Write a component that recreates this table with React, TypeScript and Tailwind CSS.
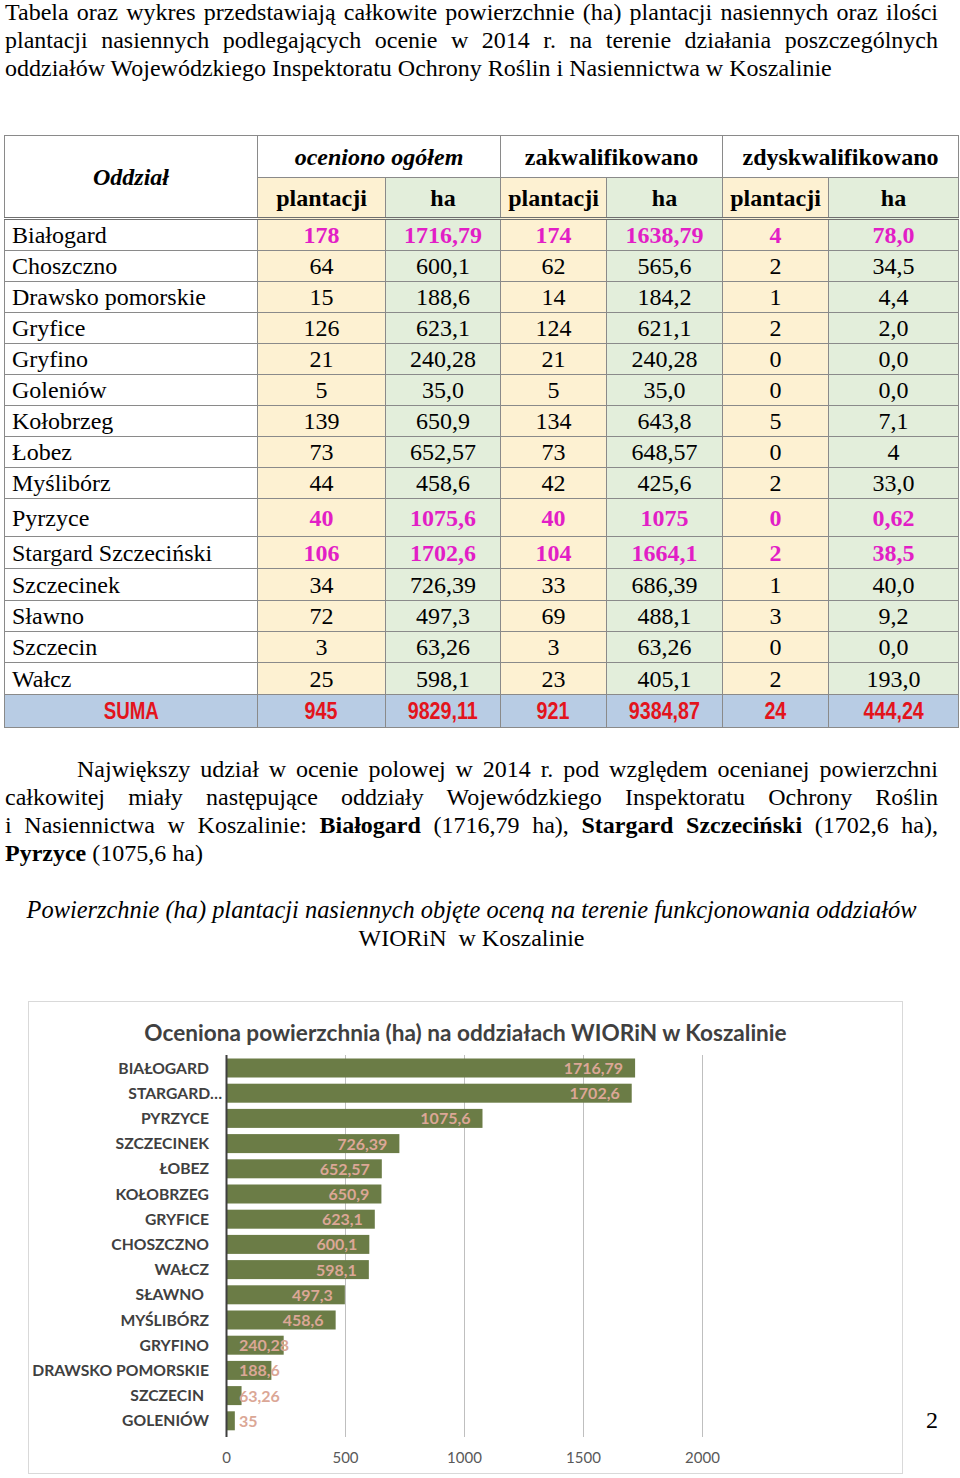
import React from "react";

type Row = {
  name: string;
  v: string[];
  hl?: boolean;
  h: string;
};

const rows: Row[] = [
  { name: "Białogard", v: ["178", "1716,79", "174", "1638,79", "4", "78,0"], hl: true, h: "h-[32px]" },
  { name: "Choszczno", v: ["64", "600,1", "62", "565,6", "2", "34,5"], h: "h-[31px]" },
  { name: "Drawsko pomorskie", v: ["15", "188,6", "14", "184,2", "1", "4,4"], h: "h-[31px]" },
  { name: "Gryfice", v: ["126", "623,1", "124", "621,1", "2", "2,0"], h: "h-[31px]" },
  { name: "Gryfino", v: ["21", "240,28", "21", "240,28", "0", "0,0"], h: "h-[31px]" },
  { name: "Goleniów", v: ["5", "35,0", "5", "35,0", "0", "0,0"], h: "h-[31px]" },
  { name: "Kołobrzeg", v: ["139", "650,9", "134", "643,8", "5", "7,1"], h: "h-[31px]" },
  { name: "Łobez", v: ["73", "652,57", "73", "648,57", "0", "4"], h: "h-[31px]" },
  { name: "Myślibórz", v: ["44", "458,6", "42", "425,6", "2", "33,0"], h: "h-[31px]" },
  { name: "Pyrzyce", v: ["40", "1075,6", "40", "1075", "0", "0,62"], hl: true, h: "h-[38px]" },
  { name: "Stargard Szczeciński", v: ["106", "1702,6", "104", "1664,1", "2", "38,5"], hl: true, h: "h-[32px]" },
  { name: "Szczecinek", v: ["34", "726,39", "33", "686,39", "1", "40,0"], h: "h-[32px]" },
  { name: "Sławno", v: ["72", "497,3", "69", "488,1", "3", "9,2"], h: "h-[31px]" },
  { name: "Szczecin", v: ["3", "63,26", "3", "63,26", "0", "0,0"], h: "h-[31px]" },
  { name: "Wałcz", v: ["25", "598,1", "23", "405,1", "2", "193,0"], h: "h-[32px]" },
];

const sums = ["945", "9829,11", "921", "9384,87", "24", "444,24"];

const colBg = ["bg-[#fdf1d2]", "bg-[#e3eedb]", "bg-[#fdf1d2]", "bg-[#e3eedb]", "bg-[#fdf1d2]", "bg-[#e3eedb]"];

const chart: { name: string; v: number; label: string; end: number }[] = [
  { name: "BIAŁOGARD", v: 1716.79, label: "1716,79", end: 180 },
  { name: "STARGARD…", v: 1702.6, label: "1702,6", end: 193 },
  { name: "PYRZYCE", v: 1075.6, label: "1075,6", end: 180 },
  { name: "SZCZECINEK", v: 726.39, label: "726,39", end: 180 },
  { name: "ŁOBEZ", v: 652.57, label: "652,57", end: 180 },
  { name: "KOŁOBRZEG", v: 650.9, label: "650,9", end: 180 },
  { name: "GRYFICE", v: 623.1, label: "623,1", end: 180 },
  { name: "CHOSZCZNO", v: 600.1, label: "600,1", end: 180 },
  { name: "WAŁCZ", v: 598.1, label: "598,1", end: 180 },
  { name: "SŁAWNO", v: 497.3, label: "497,3", end: 175 },
  { name: "MYŚLIBÓRZ", v: 458.6, label: "458,6", end: 180 },
  { name: "GRYFINO", v: 240.28, label: "240,28", end: 180 },
  { name: "DRAWSKO POMORSKIE", v: 188.6, label: "188,6", end: 180 },
  { name: "SZCZECIN", v: 63.26, label: "63,26", end: 175 },
  { name: "GOLENIÓW", v: 35, label: "35", end: 180 },
];

const X0 = 197.5;
const SC = 0.238;

function Chart() {
  return (
    <svg width="873" height="426" viewBox="0 0 873 426" className="block">
      {[500, 1000, 1500, 2000].map((g) => (
        <line key={g} x1={X0 + g * SC} x2={X0 + g * SC} y1={8} y2={390} stroke="#bfbfbf" strokeWidth={1} />
      ))}
      {chart.map((c, i) => {
        const cy = 21 + i * 25.2;
        const end = X0 + c.v * SC;
        const big = c.v >= 300;
        return (
          <g key={c.name}>
            <rect x={X0} y={cy - 9.5} width={c.v * SC} height={19} fill="#6b7c46" />
            <text
              x={c.end}
              y={cy + 5.5}
              textAnchor="end"
              fontFamily="Lato, 'Open Sans', sans-serif"
              fontWeight={700}
              fontSize={15.7}
              fill="#404040"
            >
              {c.name}
            </text>
            <text
              x={big ? end - 12 : 210}
              y={cy + 6}
              textAnchor={big ? "end" : "start"}
              fontFamily="Lato, 'Open Sans', sans-serif"
              fontWeight={700}
              fontSize={16}
              fill="#dba796"
            >
              {c.label}
            </text>
          </g>
        );
      })}
      <line x1={X0} x2={X0} y1={8} y2={390} stroke="#3f3f3f" strokeWidth={2} />
      {[0, 500, 1000, 1500, 2000].map((g) => (
        <text
          key={g}
          x={X0 + g * SC}
          y={415.5}
          textAnchor="middle"
          fontFamily="Lato, 'Open Sans', sans-serif"
          fontSize={15}
          fill="#595959"
        >
          {g}
        </text>
      ))}
    </svg>
  );
}

const lineJ = "text-justify [text-align-last:justify] leading-[28px]";

const sumaCell =
  "border border-[#8a8a8a] text-center font-['Liberation_Sans',sans-serif] font-bold text-[24px] text-[#e3141c]";

export default function App() {
  return (
    <div className="w-[960px] h-[1478px] bg-white text-black font-['Liberation_Serif','Times_New_Roman',serif] overflow-hidden">
      {/* Intro paragraph */}
      <div className="pl-[5px] pr-[22px] text-[24px] -mt-[2px]">
        <div className={lineJ}>
          Tabela oraz wykres przedstawiają całkowite powierzchnie (ha) plantacji nasiennych oraz ilości
        </div>
        <div className={lineJ}>
          plantacji nasiennych podlegających ocenie w 2014 r. na terenie działania poszczególnych
        </div>
        <div className="leading-[28px]">
          oddziałów Wojewódzkiego Inspektoratu Ochrony Roślin i Nasiennictwa w Koszalinie
        </div>
      </div>

      {/* Table */}
      <table className="mt-[53px] ml-[4px] w-[954px] table-fixed border-collapse text-[24px] leading-none">
        <colgroup>
          <col className="w-[253px]" />
          <col className="w-[128px]" />
          <col className="w-[115px]" />
          <col className="w-[106px]" />
          <col className="w-[116px]" />
          <col className="w-[106px]" />
          <col className="w-[130px]" />
        </colgroup>
        <thead>
          <tr className="h-[42px]">
            <th
              rowSpan={2}
              className="border border-[#8a8a8a] border-b-[3px] border-b-[#6f6f6f] border-double bg-white font-bold italic text-center align-middle"
            >
              Oddział
            </th>
            <th colSpan={2} className="border border-[#8a8a8a] bg-white font-bold italic">
              oceniono ogółem
            </th>
            <th colSpan={2} className="border border-[#8a8a8a] bg-white font-bold">
              zakwalifikowano
            </th>
            <th colSpan={2} className="border border-[#8a8a8a] bg-white font-bold">
              zdyskwalifikowano
            </th>
          </tr>
          <tr className="h-[41px]">
            {["plantacji", "ha", "plantacji", "ha", "plantacji", "ha"].map((t, i) => (
              <th
                key={i}
                className={`border border-[#8a8a8a] border-b-[3px] border-double border-b-[#6f6f6f] font-bold ${colBg[i]}`}
              >
                {t}
              </th>
            ))}
          </tr>
        </thead>
        <tbody>
          {rows.map((r) => (
            <tr key={r.name} className={r.h}>
              <td className="border border-[#8a8a8a] bg-white pl-[7px] text-left whitespace-nowrap">{r.name}</td>
              {r.v.map((v, i) => (
                <td
                  key={i}
                  className={`border border-[#8a8a8a] text-center ${colBg[i]} ${
                    r.hl ? "font-bold text-[#e21ec6]" : ""
                  }`}
                >
                  {v}
                </td>
              ))}
            </tr>
          ))}
          <tr className="h-[33px] bg-[#b8cce4]">
            <td className={sumaCell}>
              <span className="inline-block scale-x-[0.78]">SUMA</span>
            </td>
            {sums.map((s, i) => (
              <td key={i} className={sumaCell}>
                <span className="inline-block scale-x-[0.82]">{s}</span>
              </td>
            ))}
          </tr>
        </tbody>
      </table>

      {/* Paragraph */}
      <div className="mt-[27px] pl-[5px] pr-[22px] text-[24px]">
        <div className={`${lineJ} pl-[72px]`}>
          Największy udział w ocenie polowej w 2014 r. pod względem ocenianej powierzchni
        </div>
        <div className={lineJ}>
          całkowitej miały następujące oddziały Wojewódzkiego Inspektoratu Ochrony Roślin
        </div>
        <div className={lineJ}>
          i Nasiennictwa w Koszalinie: <b>Białogard</b> (1716,79 ha), <b>Stargard Szczeciński</b> (1702,6 ha),
        </div>
        <div className="leading-[28px]">
          <b>Pyrzyce</b> (1075,6 ha)
        </div>
      </div>

      {/* Caption */}
      <div className="mt-[28px] pl-[5px] pr-[22px] text-[24px] text-center">
        <div className="italic leading-[29px] text-[24.4px]">
          Powierzchnie (ha) plantacji nasiennych objęte oceną na terenie funkcjonowania oddziałów
        </div>
        <div className="leading-[29px] whitespace-pre">WIORiN  w Koszalinie</div>
      </div>

      {/* Chart + page number */}
      <div className="mt-[48px] flex items-end pl-[28px]">
        <div className="w-[875px] h-[473px] border border-[#d9d9d9] bg-white">
          <div className="pt-[17px] text-center leading-[28px] text-[22.6px] font-bold text-[#404040] font-['Lato','Open_Sans',sans-serif]">
            Oceniona powierzchnia (ha) na oddziałach WIORiN w Koszalinie
          </div>
          <Chart />
        </div>
        <div className="ml-[23px] pb-[40px] text-[24px] leading-[28px]">2</div>
      </div>
    </div>
  );
}
